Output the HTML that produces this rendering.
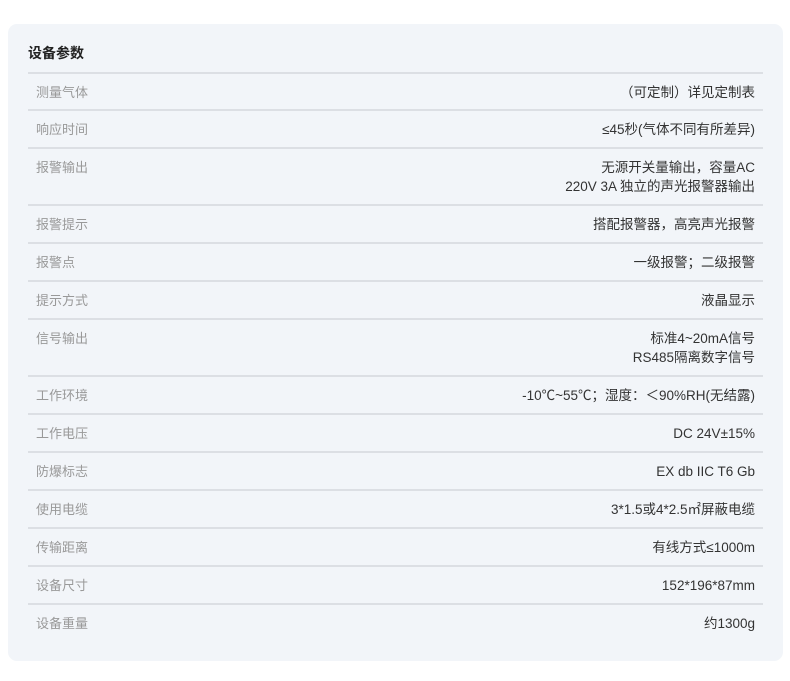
<!DOCTYPE html>
<html><head><meta charset="utf-8"><style>
body{margin:0;background:#fff;width:790px;height:681px;font-family:"Liberation Sans","Noto Sans CJK SC",sans-serif;}
.card{position:absolute;left:8px;top:24px;width:775px;height:637px;background:#f2f5f9;border-radius:9px;}
.t{position:absolute;left:28px;top:43px;font-size:14px;font-weight:bold;color:#222;line-height:20px;}
.r{position:absolute;left:28px;width:735px;border-top:2px solid #dcdfe4;font-size:13.5px;line-height:19px;}
.l{position:absolute;left:8px;top:9px;color:#999;font-size:13px;}
.v{position:absolute;right:8px;top:9px;color:#333;text-align:right;white-space:nowrap;}
</style></head><body>
<div class="card"></div>
<div class="t">设备参数</div>
<div class="r" style="top:72px"><span class="l">测量气体</span><span class="v">（可定制）详见定制表</span></div>
<div class="r" style="top:109px"><span class="l">响应时间</span><span class="v">≤45秒(气体不同有所差异)</span></div>
<div class="r" style="top:147px"><span class="l">报警输出</span><span class="v">无源开关量输出，容量AC<br>220V 3A 独立的声光报警器输出</span></div>
<div class="r" style="top:204px"><span class="l">报警提示</span><span class="v">搭配报警器，高亮声光报警</span></div>
<div class="r" style="top:242px"><span class="l">报警点</span><span class="v">一级报警；二级报警</span></div>
<div class="r" style="top:280px"><span class="l">提示方式</span><span class="v">液晶显示</span></div>
<div class="r" style="top:318px"><span class="l">信号输出</span><span class="v">标准4~20mA信号<br>RS485隔离数字信号</span></div>
<div class="r" style="top:375px"><span class="l">工作环境</span><span class="v">-10℃~55℃；湿度：＜90%RH(无结露)</span></div>
<div class="r" style="top:413px"><span class="l">工作电压</span><span class="v">DC 24V±15%</span></div>
<div class="r" style="top:451px"><span class="l">防爆标志</span><span class="v">EX db IIC T6 Gb</span></div>
<div class="r" style="top:489px"><span class="l">使用电缆</span><span class="v">3*1.5或4*2.5㎡屏蔽电缆</span></div>
<div class="r" style="top:527px"><span class="l">传输距离</span><span class="v">有线方式≤1000m</span></div>
<div class="r" style="top:565px"><span class="l">设备尺寸</span><span class="v">152*196*87mm</span></div>
<div class="r" style="top:603px"><span class="l">设备重量</span><span class="v">约1300g</span></div>
</body></html>
